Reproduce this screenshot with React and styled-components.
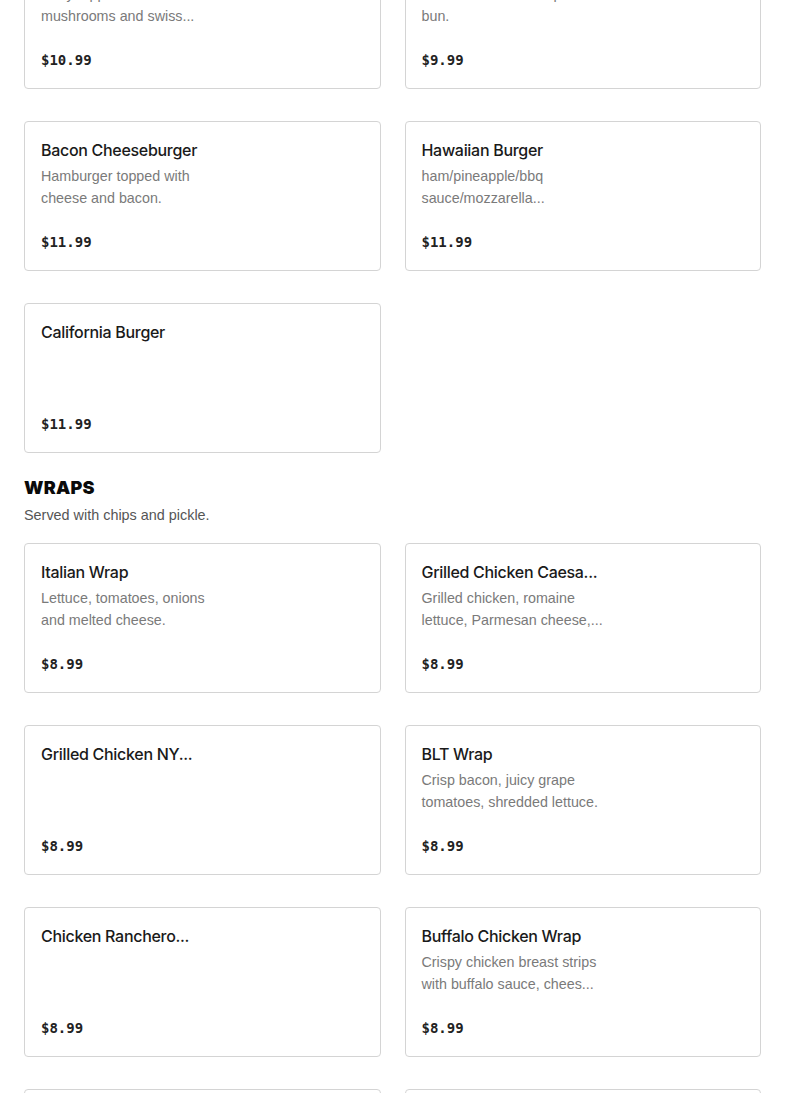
import React from "react";
import styled, { createGlobalStyle } from "styled-components";

const Global = createGlobalStyle`
  html, body { margin: 0; padding: 0; background: #ffffff; }
  body { font-family: "Liberation Sans", Arial, sans-serif; color: #1f1f1f; }
  * { box-sizing: border-box; }
`;

const Page = styled.main`
  padding: 0 24px;
  margin-top: -61px;
  display: flex;
  flex-direction: column;
`;

const Section = styled.section`
  display: flex;
  flex-direction: column;
  & + & { margin-top: 23px; }
`;

const SectionTitle = styled.h2`
  margin: 0;
  font-family: Inter, "Liberation Sans", Arial, sans-serif;
  font-size: 18px;
  font-weight: 900;
  line-height: 24px;
  letter-spacing: 0.2px;
  color: #0a0a0a;
`;

const SectionNote = styled.p`
  margin: 5px 0 18px;
  font-size: 14.4px;
  line-height: 20px;
  color: #555555;
`;

const Grid = styled.div`
  display: grid;
  grid-template-columns: 1fr 1fr;
  column-gap: 24px;
  row-gap: 32px;
`;

const Card = styled.article`
  height: 150px;
  border: 1px solid #d4d4d4;
  border-radius: 4px;
  background: #fff;
  padding: 16px 16px 18px;
  display: flex;
  flex-direction: column;
`;

const Title = styled.h3`
  margin: 0;
  font-family: Inter, "Liberation Sans", Arial, sans-serif;
  font-size: 16px;
  font-weight: 500;
  line-height: 24px;
  letter-spacing: -0.3px;
  color: #1a1a1a;
  white-space: nowrap;
`;

const Desc = styled.p`
  margin: 3px 0 0;
  max-width: 195px;
  font-size: 14.3px;
  line-height: 22px;
  color: #7a7a7a;
  white-space: pre-line;
`;

const Price = styled.span`
  margin-top: auto;
  font-family: "DejaVu Sans Mono", "Liberation Mono", monospace;
  font-size: 14px;
  font-weight: 700;
  line-height: 20px;
  color: #222222;
`;

const sections = [
  {
    id: "burgers",
    items: [
      { t: "Mushroom Swiss Burger", d: "Patty topped with sautéed\nmushrooms and swiss...", p: "$10.99" },
      { t: "Pretzel Burger", d: "Served on a toasted pretzel\nbun.", p: "$9.99" },
      { t: "Bacon Cheeseburger", d: "Hamburger topped with\ncheese and bacon.", p: "$11.99" },
      { t: "Hawaiian Burger", d: "ham/pineapple/bbq\nsauce/mozzarella...", p: "$11.99" },
      { t: "California Burger", d: "", p: "$11.99" },
    ],
  },
  {
    id: "wraps",
    title: "WRAPS",
    note: "Served with chips and pickle.",
    items: [
      { t: "Italian Wrap", d: "Lettuce, tomatoes, onions\nand melted cheese.", p: "$8.99" },
      { t: "Grilled Chicken Caesa...", d: "Grilled chicken, romaine\nlettuce, Parmesan cheese,...", p: "$8.99" },
      { t: "Grilled Chicken NY...", d: "", p: "$8.99" },
      { t: "BLT Wrap", d: "Crisp bacon, juicy grape\ntomatoes, shredded lettuce.", p: "$8.99" },
      { t: "Chicken Ranchero...", d: "", p: "$8.99" },
      { t: "Buffalo Chicken Wrap", d: "Crispy chicken breast strips\nwith buffalo sauce, chees...", p: "$8.99" },
      { t: "Turkey Club Wrap", d: "Turkey, bacon, lettuce and\ntomato.", p: "$8.99" },
      { t: "Veggie Wrap", d: "Fresh garden vegetables.", p: "$8.99" },
    ],
  },
];

export default function App() {
  return (
    <>
      <Global />
      <Page>
        {sections.map((s) => (
          <Section key={s.id}>
            {s.title && <SectionTitle>{s.title}</SectionTitle>}
            {s.note && <SectionNote>{s.note}</SectionNote>}
            <Grid>
              {s.items.map((it, i) => (
                <Card key={i}>
                  <Title>{it.t}</Title>
                  {it.d && <Desc>{it.d}</Desc>}
                  <Price>{it.p}</Price>
                </Card>
              ))}
            </Grid>
          </Section>
        ))}
      </Page>
    </>
  );
}
